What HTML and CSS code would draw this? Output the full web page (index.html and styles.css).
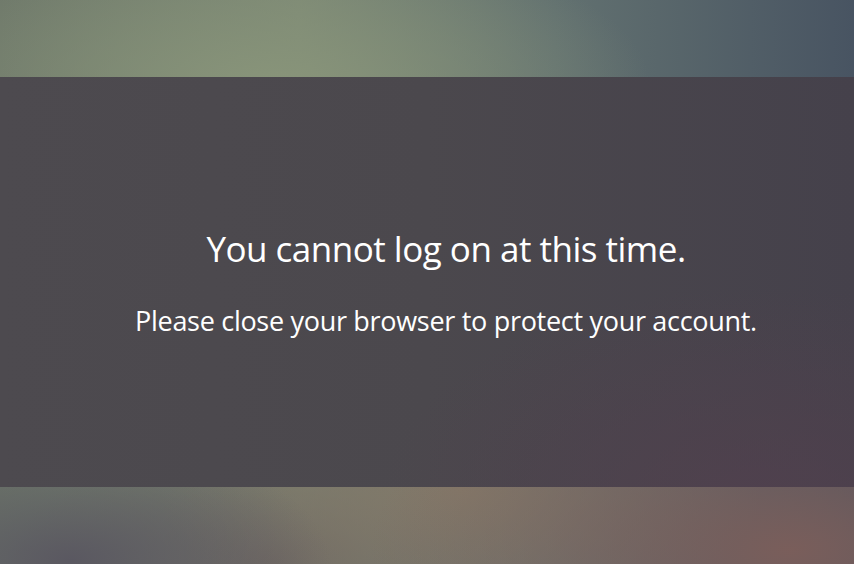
FILE: index.html
```html
<!DOCTYPE html>
<html lang="en">

<head>
    <meta charset="utf-8"/>
    <title>Log On</title>
    <link rel="stylesheet" href="styles.css">
</head>

<body>
<div class="page">
    <div class="band">
        <div class="message">
            <h1 class="title">You cannot log on at this time.</h1>
            <p class="note">Please close your browser to protect your account.</p>
        </div>
    </div>
</div>
</body>
</html>
```

FILE: styles.css
```css
* {
    padding: 0;
    margin: 0;
}

html,
body {
    height: 100%;
}

body {
    font-family: "Open Sans", "Noto Sans", sans-serif;
    color: #ffffff;
    overflow: hidden;
}

/* blurred backdrop behind the message panel */
.page {
    height: 100%;
    display: flex;
    flex-direction: column;
    justify-content: center;
    background:
        radial-gradient(ellipse 380px 150px at 270px 85px, rgba(137, 149, 122, 0.95), rgba(137, 149, 122, 0) 100%),
        radial-gradient(ellipse 260px 120px at 70px 560px, rgba(90, 88, 97, 1), rgba(90, 88, 97, 0) 100%),
        radial-gradient(ellipse 420px 200px at 790px 550px, rgba(124, 94, 90, 0.95), rgba(124, 94, 90, 0) 100%),
        radial-gradient(ellipse 300px 150px at 460px 490px, rgba(134, 121, 104, 0.9), rgba(134, 121, 104, 0) 100%),
        radial-gradient(ellipse 260px 120px at 270px 560px, rgba(108, 102, 98, 1), rgba(108, 102, 98, 0) 100%),
        linear-gradient(90deg, #6e786a 0%, #7b8774 35%, #627170 65%, #485462 100%);
}

.band {
    height: 410px;
    display: flex;
    align-items: center;
    justify-content: center;
    background:
        radial-gradient(ellipse 380px 220px at 760px 430px, rgba(82, 64, 78, 0.8), rgba(82, 64, 78, 0) 100%),
        linear-gradient(90deg, #4d4a4f 0%, #4b484d 50%, #45414b 100%);
}

.message {
    text-align: center;
    padding-left: 38px;
    padding-bottom: 1px;
}

.title {
    font-weight: 400;
    font-size: 35px;
    line-height: 44px;
    letter-spacing: -0.5px;
}

.note {
    margin-top: 34px;
    font-size: 27px;
    line-height: 32px;
    letter-spacing: -0.3px;
}
```
